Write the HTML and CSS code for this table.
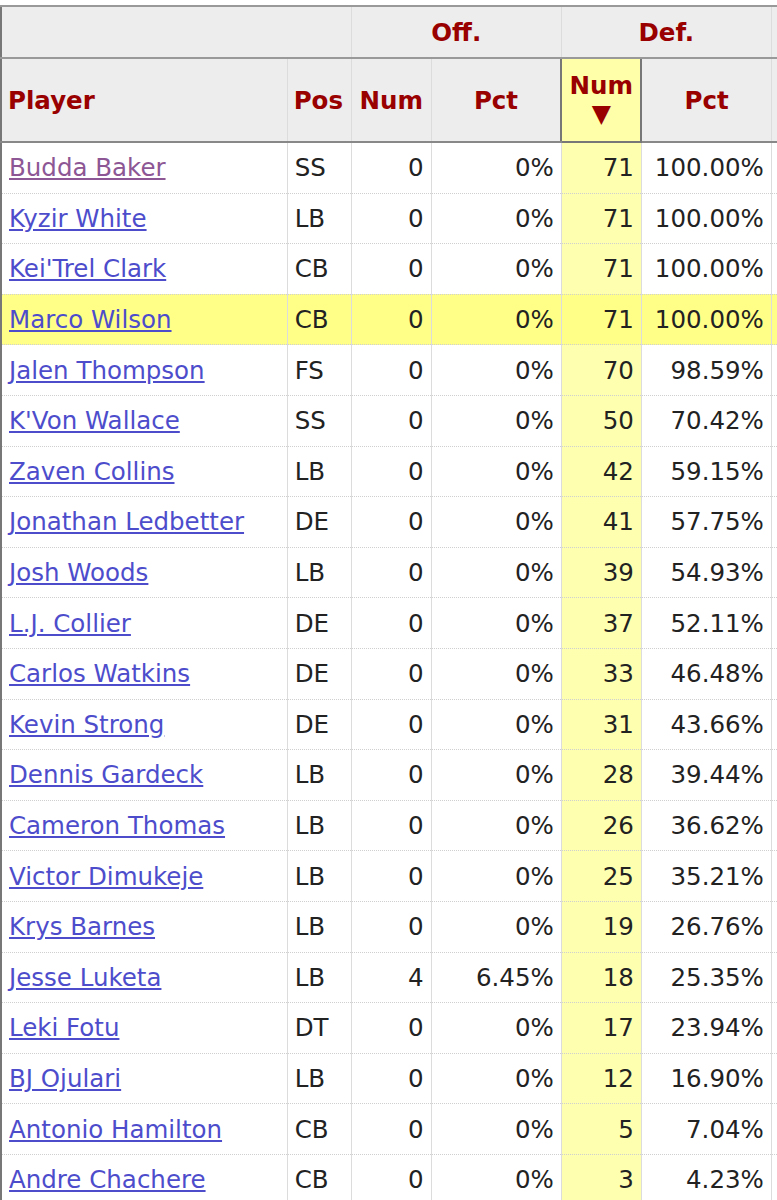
FILE: index.html
```html
<!DOCTYPE html>
<html lang="en">
<head>
<meta charset="utf-8">
<title>Snap Counts</title>
<link rel="stylesheet" href="styles.css">
</head>
<body>
<div class="wrap">
<table class="stats">
  <colgroup>
    <col class="c-player"><col class="c-pos"><col class="c-num"><col class="c-pct"><col class="c-num"><col class="c-pct"><col class="c-extra">
  </colgroup>
  <thead>
    <tr class="over">
      <th colspan="2"></th>
      <th colspan="2">Off.</th>
      <th colspan="2">Def.</th>
      <th class="extra"></th>
    </tr>
    <tr class="main">
      <th class="left">Player</th>
      <th class="left">Pos</th>
      <th>Num</th>
      <th>Pct</th>
      <th class="sorted">Num<span class="arrow">▼</span></th>
      <th>Pct</th>
      <th class="extra"></th>
    </tr>
  </thead>
  <tbody>
    <tr><td><a class="visited" href="#">Budda Baker</a></td><td>SS</td><td class="r">0</td><td class="r">0%</td><td class="r sort">71</td><td class="r">100.00%</td><td></td></tr>
    <tr><td><a href="#">Kyzir White</a></td><td>LB</td><td class="r">0</td><td class="r">0%</td><td class="r sort">71</td><td class="r">100.00%</td><td></td></tr>
    <tr><td><a href="#">Kei'Trel Clark</a></td><td>CB</td><td class="r">0</td><td class="r">0%</td><td class="r sort">71</td><td class="r">100.00%</td><td></td></tr>
    <tr class="hl"><td><a href="#">Marco Wilson</a></td><td>CB</td><td class="r">0</td><td class="r">0%</td><td class="r sort">71</td><td class="r">100.00%</td><td></td></tr>
    <tr><td><a href="#">Jalen Thompson</a></td><td>FS</td><td class="r">0</td><td class="r">0%</td><td class="r sort">70</td><td class="r">98.59%</td><td></td></tr>
    <tr><td><a href="#">K'Von Wallace</a></td><td>SS</td><td class="r">0</td><td class="r">0%</td><td class="r sort">50</td><td class="r">70.42%</td><td></td></tr>
    <tr><td><a href="#">Zaven Collins</a></td><td>LB</td><td class="r">0</td><td class="r">0%</td><td class="r sort">42</td><td class="r">59.15%</td><td></td></tr>
    <tr><td><a href="#">Jonathan Ledbetter</a></td><td>DE</td><td class="r">0</td><td class="r">0%</td><td class="r sort">41</td><td class="r">57.75%</td><td></td></tr>
    <tr><td><a href="#">Josh Woods</a></td><td>LB</td><td class="r">0</td><td class="r">0%</td><td class="r sort">39</td><td class="r">54.93%</td><td></td></tr>
    <tr><td><a href="#">L.J. Collier</a></td><td>DE</td><td class="r">0</td><td class="r">0%</td><td class="r sort">37</td><td class="r">52.11%</td><td></td></tr>
    <tr><td><a href="#">Carlos Watkins</a></td><td>DE</td><td class="r">0</td><td class="r">0%</td><td class="r sort">33</td><td class="r">46.48%</td><td></td></tr>
    <tr><td><a href="#">Kevin Strong</a></td><td>DE</td><td class="r">0</td><td class="r">0%</td><td class="r sort">31</td><td class="r">43.66%</td><td></td></tr>
    <tr><td><a href="#">Dennis Gardeck</a></td><td>LB</td><td class="r">0</td><td class="r">0%</td><td class="r sort">28</td><td class="r">39.44%</td><td></td></tr>
    <tr><td><a href="#">Cameron Thomas</a></td><td>LB</td><td class="r">0</td><td class="r">0%</td><td class="r sort">26</td><td class="r">36.62%</td><td></td></tr>
    <tr><td><a href="#">Victor Dimukeje</a></td><td>LB</td><td class="r">0</td><td class="r">0%</td><td class="r sort">25</td><td class="r">35.21%</td><td></td></tr>
    <tr><td><a href="#">Krys Barnes</a></td><td>LB</td><td class="r">0</td><td class="r">0%</td><td class="r sort">19</td><td class="r">26.76%</td><td></td></tr>
    <tr><td><a href="#">Jesse Luketa</a></td><td>LB</td><td class="r">4</td><td class="r">6.45%</td><td class="r sort">18</td><td class="r">25.35%</td><td></td></tr>
    <tr><td><a href="#">Leki Fotu</a></td><td>DT</td><td class="r">0</td><td class="r">0%</td><td class="r sort">17</td><td class="r">23.94%</td><td></td></tr>
    <tr><td><a href="#">BJ Ojulari</a></td><td>LB</td><td class="r">0</td><td class="r">0%</td><td class="r sort">12</td><td class="r">16.90%</td><td></td></tr>
    <tr><td><a href="#">Antonio Hamilton</a></td><td>CB</td><td class="r">0</td><td class="r">0%</td><td class="r sort">5</td><td class="r">7.04%</td><td></td></tr>
    <tr><td><a href="#">Andre Chachere</a></td><td>CB</td><td class="r">0</td><td class="r">0%</td><td class="r sort">3</td><td class="r">4.23%</td><td></td></tr>
  </tbody>
</table>
</div>
</body>
</html>
```

FILE: styles.css
```css
html, body {
  margin: 0;
  padding: 0;
  overflow: hidden;
  background: #fff;
}

.wrap {
  width: 777px;
  overflow: hidden;
  padding-top: 5px;
}

.stats {
  border-collapse: collapse;
  table-layout: fixed;
  width: 900px;
  font-family: "DejaVu Sans", Verdana, sans-serif;
  font-size: 24.5px;
  color: #222;
  border-left: 2px solid #777;
  border-top: 2px solid #999;
}

.c-player { width: 286px; }
.c-pos { width: 64px; }
.c-num { width: 80px; }
.c-pct { width: 130px; }
.c-extra { width: 128px; }

.stats th {
  background: #ededed;
  color: #990000;
  font-weight: bold;
  padding: 0 6px;
  text-align: center;
  border-left: 1px solid #dcdcdc;
  border-right: 1px solid #dcdcdc;
}

.stats th.left {
  text-align: left;
}

.over th {
  height: 50px;
  border-bottom: 2px solid #999;
}

.main th {
  height: 82px;
  border-bottom: 2px solid #888;
}

.main th.sorted {
  background: #ffffaa;
  border: 2px solid #777;
  line-height: 28px;
  padding-top: 0;
}

.arrow {
  display: block;
  font-size: 25px;
  line-height: 28px;
}

.stats td {
  height: 49.6px;
  padding: 0 7px;
  border-bottom: 1px dotted #cfcfcf;
  border-left: 1px solid #dcdcdc;
  border-right: 1px solid #dcdcdc;
  white-space: nowrap;
}

.stats td.r {
  text-align: right;
}

.stats td.sort {
  background: #ffffb0;
}

.stats tr.hl td {
  background: #ffff88;
}

.stats a {
  color: #4d4dcc;
  text-decoration: underline;
}

.stats a.visited {
  color: #8d5694;
}
```
